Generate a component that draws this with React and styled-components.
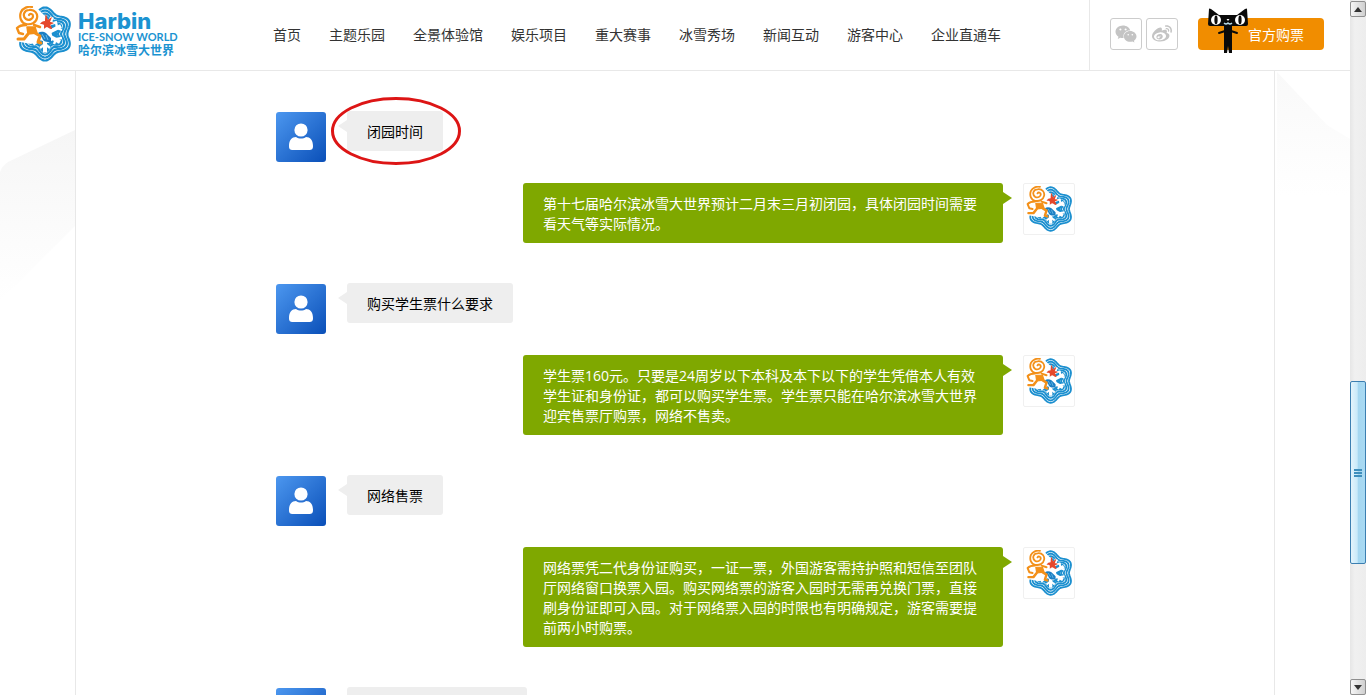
import styled, { createGlobalStyle } from 'styled-components';
import { FaWeibo, FaWeixin } from 'react-icons/fa';

const menus = [
  '首页',
  '主题乐园',
  '全景体验馆',
  '娱乐项目',
  '重大赛事',
  '冰雪秀场',
  '新闻互动',
  '游客中心',
  '企业直通车',
];

const messages = [
  { from: 'guest', text: '闭园时间', marked: true },
  {
    from: 'park',
    text: '第十七届哈尔滨冰雪大世界预计二月末三月初闭园，具体闭园时间需要看天气等实际情况。',
  },
  { from: 'guest', text: '购买学生票什么要求' },
  {
    from: 'park',
    text: '学生票160元。只要是24周岁以下本科及本下以下的学生凭借本人有效学生证和身份证，都可以购买学生票。学生票只能在哈尔滨冰雪大世界迎宾售票厅购票，网络不售卖。',
  },
  { from: 'guest', text: '网络售票' },
  {
    from: 'park',
    text: '网络票凭二代身份证购买，一证一票，外国游客需持护照和短信至团队厅网络窗口换票入园。购买网络票的游客入园时无需再兑换门票，直接刷身份证即可入园。对于网络票入园的时限也有明确规定，游客需要提前两小时购票。',
  },
  { from: 'guest', text: '冰雪大世界几点开门呢' },
];

// closed outline with six rounded lobes, one pointing up
function lobes(cx, cy, r, amp) {
  const points = [];
  for (let deg = 0; deg < 360; deg += 3) {
    const a = (deg * Math.PI) / 180;
    const d = r + amp * Math.cos(6 * a);
    const x = cx + 1.04 * d * Math.sin(a);
    const y = cy - d * Math.cos(a);
    points.push(`${x.toFixed(2)} ${y.toFixed(2)}`);
  }
  return `M${points.join('L')}Z`;
}

function Emblem({ size }) {
  return (
    <svg width={size} height={size} viewBox="0 0 56 56" aria-hidden="true">
      {[24, 21, 18, 15].map((r) => (
        <path
          key={r}
          d={lobes(30, 28, r, 2.5)}
          fill="#fff"
          stroke="#1b8fcf"
          strokeWidth="2.200"
          strokeLinejoin="round"
        />
      ))}
      <path d={lobes(30, 28, 14, 2.5)} fill="#1b8fcf" />
      <g stroke="#fff" strokeWidth="4" fill="none">
        <path d="M30 28L37 11M30 28L46 20M30 28L45 36M30 28V46M30 28L18 38" />
        <path
          d="M32 14l4 4 6-2M41 16l1 6 5 2M39 38l2-5 6-1M25 42l5-4 5 4"
          strokeWidth="2.400"
        />
      </g>
      <path d="M0 0H20L25 5 32 12 36 24 38 34 33 37 25 34 16 38 0 35Z" fill="#fff" />
      <path
        d="M31 8c-1 3-1 5-1 7-2 0-4 1-5 3 2 0 3 0 4 1l0 4c1-1 2-2 3-2 2 1 3 2 5 2 0-2-1-3-2-4l4-2c-2-1-3-1-4-1l2-5c-2 1-3 2-4 3z"
        fill="#e5482c"
      />
      <path d="M23 27c3-2 6-1 8 0l5 5 0 4c-4 0-6 0-8-2-1-3-3-5-5-7z" fill="#1b7fc4" />
      <path d="M27 28l3 5M31 29l2 5" stroke="#6dbbe4" strokeWidth="1" />
      <g
        fill="none"
        stroke="#f39019"
        strokeLinecap="round"
        strokeLinejoin="round"
      >
        <path
          d="M14 9c1-2 4-1 4 1 0 3-4 5-7 3-4-3-2-9 3-9 6-1 9 4 8 8-1 5-6 7-11 6-5-1-7-7-5-12 2-4 7-6 11-5"
          strokeWidth="2.200"
        />
        <path d="M11 19c-4 0-7 1-9 3l2 5 4 1M19 19l6 2" strokeWidth="2.400" />
        <path d="M12 21l8 0 2 6-9 1z" fill="#f39019" strokeWidth="1.500" />
        <path d="M13 28l-4 5-6 0M20 27l5 3-2 6 3 1" strokeWidth="3" />
      </g>
    </svg>
  );
}

function Cat() {
  return (
    <CatImage width="40" height="46" viewBox="0 0 40 46" aria-hidden="true">
      <path
        d="M1 1q0-1 2 0l8 6h18l8-6q2-1 2 0l1 15q0 2-2 2H2q-2 0-2-2z"
        fill="#0a0a0a"
      />
      <path d="M16 18h8v27h-3l-1-7-1 7h-3z" fill="#0a0a0a" />
      <path
        d="M17 23l-6 2M23 23l6 2"
        stroke="#0a0a0a"
        strokeWidth="2"
        strokeLinecap="round"
      />
      <ellipse cx="8" cy="12" rx="5" ry="5" fill="#fff" />
      <ellipse cx="32" cy="12" rx="5" ry="5" fill="#fff" />
      <ellipse cx="8" cy="12" rx="1.600" ry="4.400" fill="#0a0a0a" />
      <ellipse cx="32" cy="12" rx="1.600" ry="4.400" fill="#0a0a0a" />
      <path d="M18.500 11h3l-1.500 2z" fill="#fff" />
      <path
        d="M16 15q2 2 4 0 2 2 4 0"
        fill="none"
        stroke="#b9dbe8"
        strokeWidth="1.300"
      />
    </CatImage>
  );
}

function Person() {
  return (
    <svg width="50" height="50" viewBox="0 0 50 50" aria-hidden="true">
      <path
        d="M13 34c0-6 3-9 7-9 3 2 7 2 10 0 4 0 7 3 7 9 0 3-1 4-4 4H17c-3 0-4-1-4-4z"
        fill="#fff"
      />
      <circle cx="25" cy="18" r="6.600" fill="#fff" />
    </svg>
  );
}

function Message({ from, text, marked }) {
  if (from === 'guest') {
    return (
      <Question>
        <GuestAvatar>
          <Person />
        </GuestAvatar>
        <GuestBubble>
          {text}
          {marked && (
            <Ring width="130" height="68" viewBox="0 0 130 68">
              <ellipse cx="65" cy="34" rx="63.500" ry="32.500" />
            </Ring>
          )}
        </GuestBubble>
      </Question>
    );
  }
  return (
    <Answer>
      <ParkBubble>{text}</ParkBubble>
      <ParkAvatar>
        <Emblem size={46} />
      </ParkAvatar>
    </Answer>
  );
}

export default function App() {
  return (
    <Window>
      <GlobalStyle />
      <Page>
        <Header>
          <Logo href="#">
            <Emblem size={56} />
            <LogoText>
              <Name>Harbin</Name>
              <SubName>ICE-SNOW WORLD</SubName>
              <ChineseName>哈尔滨冰雪大世界</ChineseName>
            </LogoText>
          </Logo>
          <Nav>
            {menus.map((menu) => (
              <NavLink key={menu} href="#">
                {menu}
              </NavLink>
            ))}
          </Nav>
          <Tools>
            <Social href="#" aria-label="微信">
              <FaWeixin size={22} />
            </Social>
            <Social href="#" aria-label="微博">
              <FaWeibo size={20} />
            </Social>
            <TicketButton type="button">
              <Cat />
              官方购票
            </TicketButton>
          </Tools>
        </Header>
        <Main>
          <Gutter>
            <svg width="75" height="300" viewBox="0 0 75 300">
              <defs>
                <linearGradient id="left" x1="0" y1="0" x2="0" y2="1">
                  <stop offset="0" stopColor="#f6f6f6" />
                  <stop offset="1" stopColor="#fff" />
                </linearGradient>
              </defs>
              <path d="M75 59L8 91Q2 95 0 101V230L75 155Z" fill="url(#left)" />
            </svg>
          </Gutter>
          <Content>
            <Chat>
              {messages.map((message) => (
                <Message key={message.text} {...message} />
              ))}
            </Chat>
          </Content>
          <Gutter>
            <svg width="75" height="300" viewBox="0 0 75 300">
              <defs>
                <linearGradient id="right" x1="0" y1="0" x2="0" y2="1">
                  <stop offset="0" stopColor="#f9f9f9" />
                  <stop offset="1" stopColor="#fff" />
                </linearGradient>
              </defs>
              <path d="M2 1L52 54 75 68V125H2Z" fill="url(#right)" />
            </svg>
          </Gutter>
        </Main>
      </Page>
      <ScrollBar>
        <ScrollButton type="button" aria-label="向上">
          <svg width="8" height="5" viewBox="0 0 8 5">
            <path d="M4 0L8 5H0Z" fill="#333" />
          </svg>
        </ScrollButton>
        <Space $grow={365} />
        <Thumb>
          <Grip />
          <Grip />
          <Grip />
        </Thumb>
        <Space $grow={115} />
        <ScrollButton type="button" aria-label="向下">
          <svg width="8" height="5" viewBox="0 0 8 5">
            <path d="M0 0H8L4 5Z" fill="#333" />
          </svg>
        </ScrollButton>
      </ScrollBar>
    </Window>
  );
}

const GlobalStyle = createGlobalStyle`
  body {
    margin: 0;
    background: #fff;
    color: #000;
    font-family: 'Open Sans', 'Noto Sans CJK SC', sans-serif;
    font-size: 14px;
    line-height: 20px;
  }

  * {
    box-sizing: border-box;
  }

  a {
    color: inherit;
    text-decoration: none;
  }

  svg {
    display: block;
    flex-shrink: 0;
  }
`;

const Window = styled.div`
  display: flex;
  height: 100vh;
  overflow: hidden;
`;

const Page = styled.div`
  flex: 1;
  min-width: 0;
  display: flex;
  flex-direction: column;
`;

const Header = styled.header`
  display: flex;
  flex-shrink: 0;
  height: 71px;
  border-bottom: 1px solid #e8e8e8;
`;

const Logo = styled.a`
  display: flex;
  align-items: center;
  gap: 7px;
  width: 273px;
  padding: 0 0 2px 15px;
  color: #1b93d1;
`;

const LogoText = styled.div`
  display: flex;
  flex-direction: column;
  white-space: nowrap;
`;

const Name = styled.span`
  font-family: Inter, sans-serif;
  font-size: 22px;
  font-weight: 800;
  line-height: 20px;
`;

const SubName = styled.span`
  font-family: Lato, sans-serif;
  font-size: 11px;
  font-weight: 700;
  line-height: 12px;
`;

const ChineseName = styled.span`
  font-family: 'Noto Sans CJK SC', sans-serif;
  font-size: 12px;
  font-weight: 700;
  line-height: 14px;
`;

const Nav = styled.nav`
  flex: 1;
  display: flex;
  align-items: center;
  gap: 28px;
  white-space: nowrap;
`;

const NavLink = styled.a`
  color: #333;
`;

const Tools = styled.div`
  display: flex;
  align-items: center;
  gap: 4px;
  padding: 0 26px 2px 20px;
  border-left: 1px solid #e8e8e8;
`;

const Social = styled.a`
  display: flex;
  align-items: center;
  justify-content: center;
  width: 32px;
  height: 32px;
  border: 1px solid #ccc;
  border-radius: 3px;
  color: #c4c4c4;
`;

const TicketButton = styled.button`
  position: relative;
  height: 32px;
  margin-left: 16px;
  padding: 1px 20px 0 50px;
  border: none;
  border-radius: 4px;
  background: #f18d00;
  color: #fff;
  font: inherit;
  white-space: nowrap;
  cursor: pointer;
`;

const CatImage = styled.svg`
  position: absolute;
  left: 10px;
  top: -10px;
`;

const Main = styled.main`
  flex: 1;
  min-height: 0;
  display: grid;
  grid-template-columns: 1fr minmax(0, 1200px) 1fr;
  overflow: hidden;
`;

const Gutter = styled.div`
  overflow: hidden;
`;

const Content = styled.div`
  padding-top: 40px;
  border: solid #e8e8e8;
  border-width: 0 1px;
`;

const Chat = styled.div`
  max-width: 800px;
  margin: 0 auto;
`;

const Question = styled.div`
  display: flex;
  align-items: flex-start;
  gap: 20px;
  margin-bottom: 20px;
`;

const Answer = styled.div`
  display: flex;
  align-items: flex-start;
  justify-content: flex-end;
  gap: 20px;
  margin-bottom: 40px;
`;

const Avatar = styled.div`
  display: flex;
  align-items: center;
  justify-content: center;
  flex-shrink: 0;
  width: 52px;
  height: 52px;
  border: 1px solid #f0f0f0;
  border-radius: 4px;
`;

const GuestAvatar = styled(Avatar)`
  border-color: transparent;
  background: linear-gradient(135deg, #4c97ef, #0a4fb8) padding-box;
`;

const ParkAvatar = styled(Avatar)`
  border-radius: 2px;
`;

const Bubble = styled.div`
  position: relative;
  padding: 11px 20px 9px;
  border-radius: 3px;

  &::before {
    content: '';
    position: absolute;
    top: 9px;
    border: 6px solid transparent;
  }
`;

const GuestBubble = styled(Bubble)`
  background: #eee;

  &::before {
    right: 100%;
    border-right: 9px solid #eee;
    border-left: none;
  }
`;

const ParkBubble = styled(Bubble)`
  max-width: 480px;
  background: #7fa800;
  color: #fff;

  &::before {
    left: 100%;
    border-left: 9px solid #7fa800;
    border-right: none;
  }
`;

const Ring = styled.svg`
  position: absolute;
  left: -16px;
  top: -14px;
  fill: none;
  stroke: #dd1515;
  stroke-width: 3px;
`;

const ScrollBar = styled.aside`
  display: flex;
  flex-direction: column;
  width: 16px;
  padding-top: 1px;
  background: linear-gradient(90deg, #e6e6e6, #f0f0f0 30%, #ededed);
`;

const ScrollButton = styled.button`
  display: flex;
  align-items: center;
  justify-content: center;
  height: 16px;
  padding: 0;
  border: 1px solid #8f8f8f;
  border-radius: 2px;
  background: linear-gradient(90deg, #f6f6f6, #cfcfcf);
`;

const Space = styled.div`
  flex: ${({ $grow }) => $grow} 0 0;
`;

const Thumb = styled.div`
  flex: 181 0 0;
  display: flex;
  flex-direction: column;
  align-items: center;
  justify-content: center;
  gap: 1px;
  border: 1px solid #3c7fb1;
  border-radius: 2px;
  background: linear-gradient(90deg, #e3f4fc, #c9e9f9 45%, #a5d7f1 50%, #a9daf3);
`;

const Grip = styled.span`
  width: 8px;
  height: 2px;
  background: #3f8fbd;
`;
